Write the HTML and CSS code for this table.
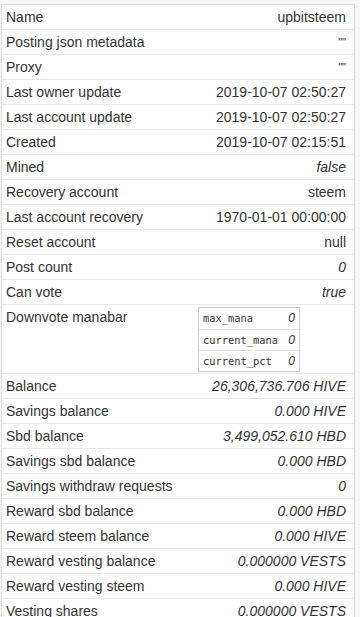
FILE: index.html
```html
<!DOCTYPE html>
<html>
<head>
<meta charset="utf-8">
<link rel="stylesheet" href="styles.css">
</head>
<body>
<div class="card">
  <div class="row"><span class="k">Name</span><span class="v">upbitsteem</span></div>
  <div class="row"><span class="k">Posting json metadata</span><span class="v small">""</span></div>
  <div class="row"><span class="k">Proxy</span><span class="v small">""</span></div>
  <div class="row"><span class="k">Last owner update</span><span class="v">2019-10-07 02:50:27</span></div>
  <div class="row"><span class="k">Last account update</span><span class="v">2019-10-07 02:50:27</span></div>
  <div class="row"><span class="k">Created</span><span class="v">2019-10-07 02:15:51</span></div>
  <div class="row"><span class="k">Mined</span><span class="v i">false</span></div>
  <div class="row"><span class="k">Recovery account</span><span class="v">steem</span></div>
  <div class="row"><span class="k">Last account recovery</span><span class="v">1970-01-01 00:00:00</span></div>
  <div class="row"><span class="k">Reset account</span><span class="v">null</span></div>
  <div class="row"><span class="k">Post count</span><span class="v i">0</span></div>
  <div class="row"><span class="k">Can vote</span><span class="v i">true</span></div>
  <div class="row tall"><span class="k">Downvote manabar</span>
    <div class="sub">
      <div class="srow"><span class="sk">max_mana</span><span class="sv">0</span></div>
      <div class="srow"><span class="sk">current_mana</span><span class="sv">0</span></div>
      <div class="srow"><span class="sk">current_pct</span><span class="sv">0</span></div>
    </div>
  </div>
  <div class="row"><span class="k">Balance</span><span class="v i">26,306,736.706 HIVE</span></div>
  <div class="row"><span class="k">Savings balance</span><span class="v i">0.000 HIVE</span></div>
  <div class="row"><span class="k">Sbd balance</span><span class="v i">3,499,052.610 HBD</span></div>
  <div class="row"><span class="k">Savings sbd balance</span><span class="v i">0.000 HBD</span></div>
  <div class="row"><span class="k">Savings withdraw requests</span><span class="v i">0</span></div>
  <div class="row"><span class="k">Reward sbd balance</span><span class="v i">0.000 HBD</span></div>
  <div class="row"><span class="k">Reward steem balance</span><span class="v i">0.000 HIVE</span></div>
  <div class="row"><span class="k">Reward vesting balance</span><span class="v i">0.000000 VESTS</span></div>
  <div class="row"><span class="k">Reward vesting steem</span><span class="v i">0.000 HIVE</span></div>
  <div class="row"><span class="k">Vesting shares</span><span class="v i">0.000000 VESTS</span></div>
</div>
</body>
</html>
```
FILE: styles.css
```css
html, body {
  margin: 0;
  padding: 0;
  background: #f7f7f7;
}
body {
  font-family: "Liberation Sans", Arial, sans-serif;
  font-size: 14px;
  color: #333;
  overflow: hidden;
}
.card {
  margin: 4px 0 0 1px;
  width: 354px;
  box-sizing: border-box;
  background: #fff;
  border: 1px solid #dddddd;
  border-bottom: none;
}
.row {
  display: grid;
  grid-template-columns: 192px 1fr;
  align-items: center;
  height: 25px;
  box-sizing: border-box;
  padding: 0 8px 0 4px;
  border-bottom: 1px solid #e8e8e8;
  line-height: 24px;
}
.v {
  justify-self: end;
  white-space: nowrap;
}
.i { font-style: italic; }
.small { font-size: 11px; }
.row.tall {
  height: 69px;
  align-items: start;
  padding-top: 0;
}
.sub {
  margin-top: 2px;
  width: 102px;
  box-sizing: border-box;
  border: 1px solid #cccccc;
  line-height: 20px;
}
.srow {
  display: flex;
  justify-content: space-between;
  height: 20px;
  padding: 0 4px 0 4px;
  border-top: 1px solid #e0e0e0;
}
.srow:first-child { border-top: none; height: 21px; line-height: 21px; }
.sk {
  font-family: "DejaVu Sans Mono", monospace;
  font-size: 10.4px;
}
.sv {
  font-style: italic;
  font-size: 12px;
}
```
